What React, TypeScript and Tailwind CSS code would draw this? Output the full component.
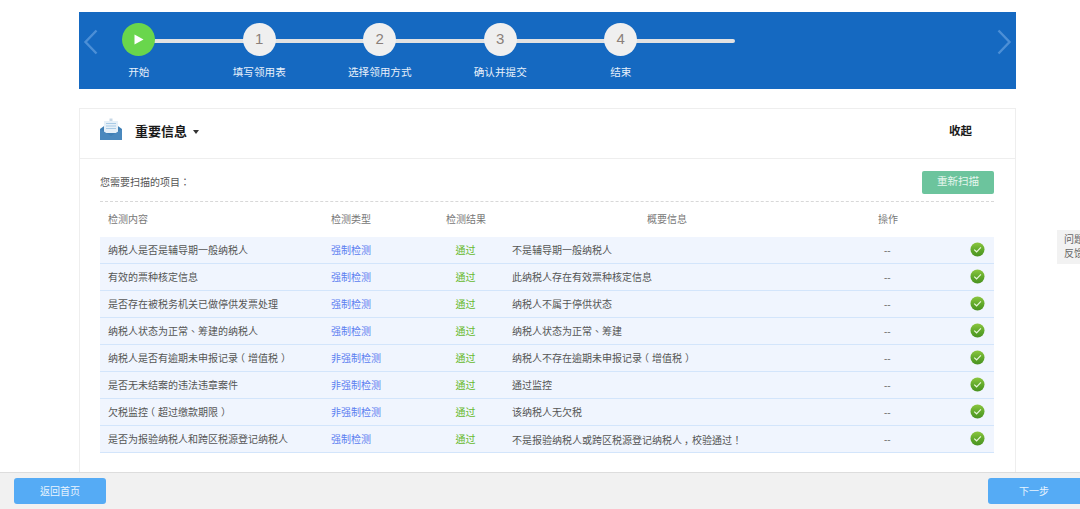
const FONT = "font-['Liberation_Sans','Noto_Sans_CJK_TC',sans-serif]";

const steps = [
  { mark: "", label: "开始" },
  { mark: "1", label: "填写领用表" },
  { mark: "2", label: "选择领用方式" },
  { mark: "3", label: "确认并提交" },
  { mark: "4", label: "结束" },
];

const rows = [
  ["纳税人是否是辅导期一般纳税人", "强制检测", "不是辅导期一般纳税人"],
  ["有效的票种核定信息", "强制检测", "此纳税人存在有效票种核定信息"],
  ["是否存在被税务机关已做停供发票处理", "强制检测", "纳税人不属于停供状态"],
  ["纳税人状态为正常、筹建的纳税人", "强制检测", "纳税人状态为正常、筹建"],
  ["纳税人是否有逾期未申报记录（增值税）", "非强制检测", "纳税人不存在逾期未申报记录（增值税）"],
  ["是否无未结案的违法违章案件", "非强制检测", "通过监控"],
  ["欠税监控（超过缴款期限）", "非强制检测", "该纳税人无欠税"],
  ["是否为报验纳税人和跨区税源登记纳税人", "强制检测", "不是报验纳税人或跨区税源登记纳税人，校验通过！"],
];

function Punct({ text }: { text: string }) {
  return (
    <>
      {text.split(/([（），])/).map((part, i) => {
        if (part === "（") return <span key={i} className="pl-[2px] pr-[3px] [font-feature-settings:'halt']">（</span>;
        if (part === "）") return <span key={i} className="pl-[3px] pr-[2px] [font-feature-settings:'halt']">）</span>;
        if (part === "，") return <span key={i} className="inline-block translate-x-[2px] font-['Noto_Sans_CJK_SC',sans-serif]">，</span>;
        return part;
      })}
    </>
  );
}

function Chevron({ flip }: { flip?: boolean }) {
  return (
    <svg width="16" height="26" viewBox="0 0 16 26" fill="none" className={flip ? "rotate-180" : ""}>
      <path d="M13.5 1.5 2.5 13l11 11.5" stroke="#4c8fd6" strokeWidth="2.4" />
    </svg>
  );
}

function CheckBadge({ id }: { id: number }) {
  const g = `check-grad-${id}`;
  return (
    <svg width="15" height="15" viewBox="0 0 15 15">
      <defs>
        <linearGradient id={g} x1="0" y1="0" x2="0" y2="1">
          <stop offset="0" stopColor="#8cc63f" />
          <stop offset="0.55" stopColor="#5fa82a" />
          <stop offset="1" stopColor="#4a9221" />
        </linearGradient>
      </defs>
      <circle cx="7.5" cy="7.5" r="7" fill={`url(#${g})`} />
      <path d="M4.2 7.6 6.6 9.8 10.9 5.4" fill="none" stroke="#e9f6dc" strokeWidth="1.2" />
    </svg>
  );
}

function Envelope() {
  return (
    <svg width="22" height="22" viewBox="0 0 22 22" className="mb-[6px]">
      <path d="M0 11 11 3l11 8v11H0z" fill="#3f7fb5" />
      <rect x="4" y="3" width="14" height="12" fill="#e6f0f8" />
      <path d="M6 5.5h10M6 8h10M6 10.5h10" stroke="#a9cbe6" strokeWidth="1" />
      <path d="M0 11l11 7 11-7v11H0z" fill="#4a88bd" />
      <path d="M9.5 0.5h3v2.5h-3z" fill="#c8d8e6" />
    </svg>
  );
}

export default function App() {
  return (
    <div className={`${FONT} relative flex h-[509px] w-[1080px] flex-col overflow-hidden bg-white`}>
      <main className="min-h-0 flex-1 pt-3 pl-[79px]">
        <div className="relative h-[77px] w-[937px] bg-[#1569c1]">
          <span className="absolute left-[4px] top-[17px]"><Chevron /></span>
          <span className="absolute right-[4px] top-[17px]"><Chevron flip /></span>
          <div className="relative -ml-[0.5px] flex w-fit">
            <div className="absolute left-[60px] top-[27px] h-[4px] w-[596px] rounded-full bg-[#e2e2e2]" />
            {steps.map((s, i) => (
              <div key={s.label} className="relative flex w-[120.5px] flex-col items-center pt-[11px]">
                {i === 0 ? (
                  <div className="flex h-[33px] w-[33px] items-center justify-center rounded-full bg-[#69d64c]">
                    <svg width="10" height="11" viewBox="0 0 10 11"><path d="M0.5 0.5 9.5 5.5 0.5 10.5z" fill="#fff" /></svg>
                  </div>
                ) : (
                  <div className="flex h-[33px] w-[33px] items-center justify-center rounded-full bg-[#efefef] text-[15px] text-[#8a7f7a]">{s.mark}</div>
                )}
                <div className="mt-[8px] text-[10.6px] leading-[16px] whitespace-nowrap text-[#e8f0fa]">{s.label}</div>
              </div>
            ))}
          </div>
        </div>

        <section className="mt-[19px] h-[400px] w-[937px] border border-[#eeeeee] bg-white">
          <header className="flex h-[50px] items-center border-b border-[#eeeeee] pb-[4px] pl-[20px]">
            <Envelope />
            <h2 className="ml-[13px] text-[13px] font-bold text-[#1a1a1a]">重要信息</h2>
            <span className="ml-[6px] mt-[1px] h-0 w-0 border-x-[3.5px] border-t-[4px] border-x-transparent border-t-[#333]" />
            <button className="ml-auto mr-[43px] text-[11.5px] font-bold text-[#1a1a1a]">收起</button>
          </header>

          <div className="w-[935px] pl-[20px] pr-[21px]">
            <div className="flex h-[43px] items-center justify-between border-b border-dashed border-[#d8d8d8] pt-[4px]">
              <span className="text-[10px] text-[#555]">您需要扫描的项目：</span>
              <button className="h-[23px] w-[72px] rounded-[2px] bg-[#6cc49d] text-[10.5px] text-[#e6f6ee]">重新扫描</button>
            </div>

            <div className="grid h-[35px] grid-cols-[231px_115px_39px_373px_102px_34px] items-center text-[10px] text-[#777]">
              <div className="pl-[8px]">检测内容</div>
              <div>检测类型</div>
              <div className="text-center whitespace-nowrap">检测结果</div>
              <div className="pr-[9px] text-center">概要信息</div>
              <div className="pl-[20px]">操作</div>
              <div />
            </div>

            {rows.map((r, i) => (
              <div
                key={r[0]}
                className="grid h-[27px] grid-cols-[231px_115px_39px_373px_102px_34px] items-center border-b-[1.5px] border-[#d3e5fb] bg-[#f0f5fe] text-[10px] text-[#555]"
              >
                <div className="pl-[8px] pt-[1px]"><Punct text={r[0]} /></div>
                <div className="pt-[1px] text-[#5b7df0]">{r[1]}</div>
                <div className="pt-[1px] text-center text-[#67b92e]">通过</div>
                <div className="pl-[27px] pt-[1px]"><Punct text={r[2]} /></div>
                <div className="pl-[26px] pt-[1px] text-[#777]">--</div>
                <div className="flex justify-center pb-[2px]"><CheckBadge id={i} /></div>
              </div>
            ))}
          </div>
        </section>
      </main>

      <aside className="absolute right-0 top-[230px] h-[34px] w-[23px] bg-[#f2f2f2] pl-[7px] pt-[3px] text-[10px] leading-[14px] whitespace-nowrap text-[#666]">
        问题<br />反馈
      </aside>

      <footer className="z-10 flex h-[37px] items-center justify-between border-t border-[#dddddd] bg-[#f1f1f1] pl-[14px]">
        <button className="h-[26px] w-[92px] rounded-[3px] bg-[#55abf5] text-[10px] text-[#e8f4fe]">返回首页</button>
        <button className="h-[26px] w-[92px] rounded-l-[3px] bg-[#55abf5] text-[10px] text-[#e8f4fe]">下一步</button>
      </footer>
    </div>
  );
}
